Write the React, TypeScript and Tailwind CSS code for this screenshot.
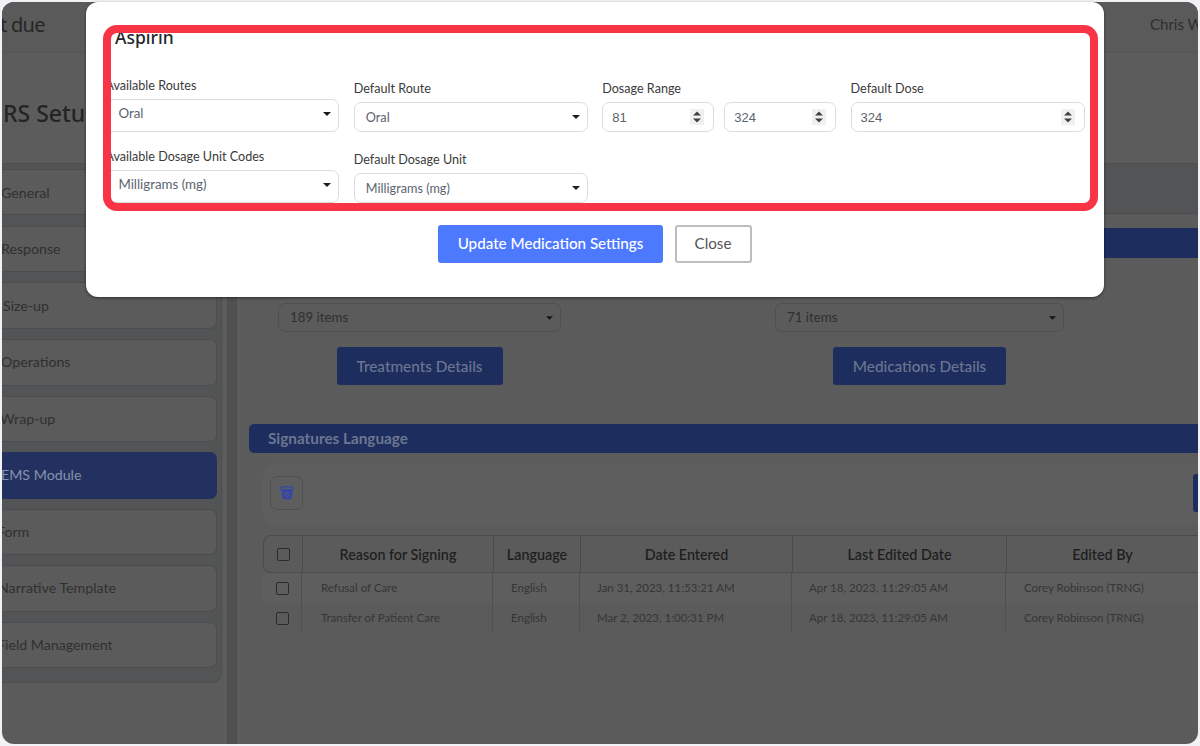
import React from 'react';

const sideItems = [
    { label: 'General', cls: 'h-[46px] mt-[5px]', text: '-ml-[1px] pt-[1px]' },
    { label: 'Response', cls: 'h-[46px] mt-[11px]', text: '-ml-[1px]' },
    { label: 'Size-up', cls: 'h-[47px] mt-[10px]', text: 'ml-[1px]' },
    { label: 'Operations', cls: 'h-[47px] mt-[10px]', text: '-ml-[1px] pb-[1px]' },
    { label: 'Wrap-up', cls: 'h-[46px] mt-[10px]', text: '-ml-[2px]' },
    { label: 'EMS Module', active: true, cls: 'h-[47px] mt-[10px]', text: '-ml-[1px] pb-[1px]' },
    { label: 'Form', cls: 'h-[46px] mt-[10px]', text: '-ml-[5px]' },
    { label: 'Narrative Template', cls: 'h-[47px] mt-[10px]', text: '-ml-[4px] pb-[1px]' },
    { label: 'Field Management', cls: 'h-[46px] mt-[10px]', text: '-ml-[5px]' },
];

const columns = 'grid grid-cols-[38px_191px_87px_212px_214px_192px]';

const rows = [
    { reason: 'Refusal of Care', entered: 'Jan 31, 2023, 11:53:21 AM' },
    { reason: 'Transfer of Patient Care', entered: 'Mar 2, 2023, 1:00:31 PM' },
];

const Caret = ({ className }: { className: string }) => (
    <svg viewBox="0 0 8 4" className={className}>
        <path d="M0 0h8L4 4z" fill="currentColor" />
    </svg>
);

const Spinner = () => (
    <svg viewBox="0 0 14 16" className="w-[14px] h-[16px] shrink-0">
        <rect width="14" height="16" fill="#f0f0f0" />
        <path d="M3 6.5 7 2.5l4 4zM3 9.5h8l-4 4z" fill="#404040" />
    </svg>
);

const labelCls = 'block text-[12.6px] leading-[16px] text-[#3b3b3b] mb-[5px]';

const SelectField = ({ label, value, first }: { label: string; value: string; first?: boolean }) => (
    <div>
        <label className={labelCls}>{label}</label>
        <div className={`flex items-center justify-between border border-[#dcdcdc] rounded-[7px] pr-[7px] ${first ? 'h-[33px] pl-[12px] pb-[3px]' : 'h-[30px] pl-[11px]'}`}>
            <span className={`text-[#5b646e] ${first ? 'text-[13.3px]' : 'text-[12.7px] pt-[1px]'}`}>{value}</span>
            <Caret className="w-[8px] h-[4px] text-[#1c1c1c]" />
        </div>
    </div>
);

const NumberBox = ({ value }: { value: string }) => (
    <div className="flex-1 flex items-center justify-between h-[30px] border border-[#dcdcdc] rounded-[7px] pl-[9px] pr-[9px]">
        <span className="text-[13px] pt-[1px] text-[#5b646e] font-['Liberation_Sans',sans-serif]">{value}</span>
        <Spinner />
    </div>
);

const DarkSelect = ({ value, cls }: { value: string; cls: string }) => (
    <div className={`flex items-center justify-between h-[29px] border border-[#505050] rounded-[7px] pl-[11px] pr-[7px] ${cls}`}>
        <span className="text-[13.3px] text-[#2f2f2f]">{value}</span>
        <Caret className="w-[7px] h-[4px] text-[#151515]" />
    </div>
);

const DarkButton = ({ label, cls }: { label: string; cls: string }) => (
    <div className={`h-[38px] flex items-center justify-center rounded-[3px] bg-[#1c2d5e] text-[15.3px] font-medium text-[#6c7691] ${cls}`}>
        {label}
    </div>
);

const WasteBasket = () => (
    <svg viewBox="0 0 14 14" className="w-[14px] h-[14px]" fill="none" stroke="#3447a8">
        <ellipse cx="7" cy="2.2" rx="6.2" ry="1.7" strokeWidth="1.3" />
        <path d="M.9 2.5 2.4 12c.2 1 2.2 1.6 4.6 1.6s4.4-.6 4.6-1.6L13.100 2.500c-1.500 1.500-10.700 1.500-12.200 0z" fill="#3447a8" stroke="none" />
        <path d="M3 6.500 7.500 12M6 5.500l4 5M11 6.500 6.500 12M8 5.500l-4 5" stroke="#5b5b5b" strokeWidth="0.7" />
    </svg>
);

const App: React.FC = () => {
    return (
        <div className="relative w-[1200px] h-[746px] overflow-hidden bg-[#f1f2f6] p-[2px] font-['Lato',sans-serif]">
            <div className="flex flex-col h-full rounded-[12px] overflow-hidden bg-[#5b5b5b]">
                <div className="flex justify-between shrink-0 h-[51px] bg-[#5a5a5a] border-b border-[#545454]">
                    <span className="-ml-[2px] mt-[9px] text-[20px] leading-[28px] tracking-[-0.7px] text-[#262626] font-['Noto_Sans',sans-serif]">t due</span>
                    <span className="mt-[12px] text-[15px] leading-[20px] text-[#2e2e2e] whitespace-nowrap w-[48px] overflow-hidden">Chris Wilson</span>
                </div>
                <div className="flex items-center shrink-0 h-[111px] bg-[#5c5c5c] border-b border-[#4f4f4f] pl-[1px] pt-[10px]">
                    <span className="text-[23px] font-medium text-[#242424] font-['Noto_Sans',sans-serif]">RS Setup</span>
                </div>

                <div className="flex flex-1 min-h-0">
                    <div className="w-[220px] shrink-0 self-start h-[519px] bg-[#535455] border-r border-b border-[#4e4e4e] rounded-br-[10px] pr-[4px] overflow-hidden">
                        {sideItems.map((item) => (
                            <div
                                key={item.label}
                                className={`flex items-center rounded-r-[7px] border border-l-0 text-[14.2px] whitespace-nowrap overflow-hidden ${item.cls} ${item.active ? 'bg-[#22315f] border-[#22315f] text-[#8791ad]' : 'bg-[#5b5b5b] border-[#4d4d4d] text-[#303030]'}`}
                            >
                                <span className={item.text}>{item.label}</span>
                            </div>
                        ))}
                    </div>

                    <div className="w-[5px] shrink-0" />
                    <div className="w-[10px] shrink-0 bg-[#505050] border-x border-[#4d4d4d]" />

                    <div className="flex-1 min-w-0 overflow-hidden">
                        <div className="h-[50px] bg-[#535456] border-b border-[#4c4c4c]" />

                        <div className="ml-[12px] mt-[14px] h-[30px] bg-[#1c2d5e] rounded-l-[5px]" />

                        <div className="flex mt-[45px] ml-[41px]">
                            <div className="flex flex-col items-center w-[283px]">
                                <DarkSelect value="189 items" cls="w-full" />
                                <DarkButton label="Treatments Details" cls="w-[166px] mt-[15px]" />
                            </div>
                            <div className="flex flex-col items-center w-[289px] ml-[214px]">
                                <DarkSelect value="71 items" cls="w-full" />
                                <DarkButton label="Medications Details" cls="w-[173px] mt-[15px]" />
                            </div>
                        </div>

                        <div className="flex items-center ml-[12px] mt-[39px] h-[29px] bg-[#1c2d5e] rounded-l-[5px] pl-[19px] text-[15.3px] font-bold text-[#6c7691]">
                            Signatures Language
                        </div>

                        <div className="flex items-center justify-between ml-[26px] mt-[10px] h-[62px] bg-[#5e5e5e] rounded-l-[12px] pl-[7px] pb-[2px]">
                            <div className="flex items-center justify-center w-[33px] h-[34px] border border-[#505050] rounded-[7px]">
                                <WasteBasket />
                            </div>
                            <div className="w-[5px] h-[38px] bg-[#1c2d5e] rounded-l-[3px]" />
                        </div>

                        <div className="ml-[26px] mt-[10px] w-[935px]">
                            <div className={`${columns} h-[38px] border border-r-0 border-[#4b4b4b] rounded-l-[8px] text-[14.3px] font-semibold text-[#1f1f1f]`}>
                                <div className="flex items-center pl-[13px]">
                                    <span className="w-[13px] h-[13px] border border-[#2b2b2b] rounded-[2px]" />
                                </div>
                                <div className="flex items-center justify-center pt-[1px] border-l border-[#4b4b4b]">Reason for Signing</div>
                                <div className="flex items-center justify-center pt-[1px] border-l border-[#4b4b4b]">Language</div>
                                <div className="flex items-center justify-center pt-[1px] border-l border-[#4b4b4b]">Date Entered</div>
                                <div className="flex items-center justify-center pt-[1px] border-l border-[#4b4b4b]">Last Edited Date</div>
                                <div className="flex items-center justify-center pt-[1px] border-l border-[#4b4b4b]">Edited By</div>
                            </div>
                            {rows.map((row, i) => (
                                <div key={row.reason} className={`${columns} h-[30px] text-[11.5px] text-[#363636] ${i === 0 ? 'bg-[#5e5e5e]' : ''}`}>
                                    <div className="flex items-center pl-[13px]">
                                        <span className="w-[13px] h-[13px] border border-[#2b2b2b] rounded-[2px]" />
                                    </div>
                                    <div className="flex items-center pl-[19px] border-l border-[#4f4f4f]">{row.reason}</div>
                                    <div className="flex items-center pl-[18px] border-l border-[#4f4f4f]">English</div>
                                    <div className="flex items-center pl-[17px] border-l border-[#4f4f4f]">{row.entered}</div>
                                    <div className="flex items-center pl-[17px] border-l border-[#4f4f4f]">Apr 18, 2023, 11:29:05 AM</div>
                                    <div className="flex items-center pl-[18px] border-l border-[#4f4f4f]">Corey Robinson (TRNG)</div>
                                </div>
                            ))}
                        </div>
                    </div>
                </div>
            </div>

            <div className="absolute left-[86px] top-[2px] w-[1018px] h-[295px] bg-white rounded-[12px] shadow-[0_1px_3px_rgba(0,0,0,0.5)] overflow-hidden">
                <h2 className="pl-[29px] pt-[25px] text-[17.5px] leading-[20px] font-medium text-[#262626] font-['Noto_Sans',sans-serif]">Aspirin</h2>
                <div className="grid grid-cols-[234px_234px_234px_234px] gap-x-[14.4px] gap-y-[17px] items-end pl-[19.4px] mt-[31px]">
                    <SelectField label="Available Routes" value="Oral" first />
                    <SelectField label="Default Route" value="Oral" />
                    <div>
                        <label className={labelCls}>Dosage Range</label>
                        <div className="flex gap-[10px]">
                            <NumberBox value="81" />
                            <NumberBox value="324" />
                        </div>
                    </div>
                    <div>
                        <label className={labelCls}>Default Dose</label>
                        <NumberBox value="324" />
                    </div>
                    <SelectField label="Available Dosage Unit Codes" value="Milligrams (mg)" first />
                    <SelectField label="Default Dosage Unit" value="Milligrams (mg)" />
                </div>
                <div className="flex justify-center gap-[12px] mt-[22px]">
                    <button className="w-[225px] h-[38px] pb-[1px] rounded-[3px] bg-[#4d79ff] text-[15.2px] font-medium text-white">Update Medication Settings</button>
                    <button className="w-[77px] h-[38px] pb-[1px] pr-[1px] rounded-[3px] border-2 border-[#bdbdbd] text-[15.2px] text-[#555]">Close</button>
                </div>
            </div>

            {/* annotation box from the screenshot */}
            <div className="absolute left-[103px] top-[25px] w-[995px] h-[186px] border-[8px] border-[#f93545] rounded-[14px] pointer-events-none" />
        </div>
    );
};

export default App;
